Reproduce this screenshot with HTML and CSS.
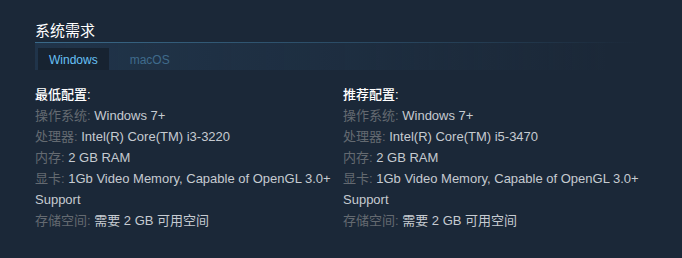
FILE: index.html
```html
<!DOCTYPE html>
<html lang="zh-CN">
<head>
  <meta charset="UTF-8"/>
  <title>系统需求</title>
  <link rel="stylesheet" href="styles.css">
</head>
<body>

<section class="sysreq">
  <h2>系统需求</h2>

  <div class="sysreq-tabs">
    <span class="tab active">Windows</span>
    <span class="tab">macOS</span>
  </div>

  <div class="sysreq-cols">
    <div class="col">
      <strong class="col-title">最低配置:</strong>
      <ul>
        <li><span class="label">操作系统:</span> Windows 7+</li>
        <li><span class="label">处理器:</span> Intel(R) Core(TM) i3-3220</li>
        <li><span class="label">内存:</span> 2 GB RAM</li>
        <li><span class="label">显卡:</span> 1Gb Video Memory, Capable of OpenGL 3.0+ Support</li>
        <li><span class="label">存储空间:</span> 需要 2 GB 可用空间</li>
      </ul>
    </div>
    <div class="col">
      <strong class="col-title">推荐配置:</strong>
      <ul>
        <li><span class="label">操作系统:</span> Windows 7+</li>
        <li><span class="label">处理器:</span> Intel(R) Core(TM) i5-3470</li>
        <li><span class="label">内存:</span> 2 GB RAM</li>
        <li><span class="label">显卡:</span> 1Gb Video Memory, Capable of OpenGL 3.0+ Support</li>
        <li><span class="label">存储空间:</span> 需要 2 GB 可用空间</li>
      </ul>
    </div>
  </div>
</section>

</body>
</html>
```

FILE: styles.css
```css
body {
  background-color: #1b2838;
  color: #c6cbd1;
  font-family: "Liberation Sans", Arial, "Noto Sans CJK SC", sans-serif;
  margin: 0;
  padding: 0;
}

.sysreq {
  padding: 21px 35px 0 35px;
}

.sysreq h2 {
  margin: 0 0 1px 0;
  font-size: 15px;
  line-height: 20px;
  font-weight: normal;
  color: #fff;
}

.sysreq-tabs {
  display: flex;
  align-items: flex-end;
  gap: 10px;
  height: 22px;
  padding: 5px 0 0 3px;
  border-top: 1px solid;
  border-image: linear-gradient(to right, #3a6a8a 0%, #2b4c66 50%, rgba(27,40,56,0) 100%) 1;
  background: linear-gradient(to right, rgba(40,70,100,0.4) 0%, rgba(35,60,85,0.25) 55%, rgba(27,40,56,0) 95%);
  width: 600px;
}

.tab {
  font-size: 12px;
  line-height: 20px;
  padding: 2px 11px 0;
  color: #3f6b8c;
}

.tab.active {
  background: #172331;
  color: #67c1f5;
}

.sysreq-cols {
  display: grid;
  grid-template-columns: 300px 300px;
  gap: 8px;
  margin-top: 14px;
}

.col-title {
  display: block;
  font-size: 13px;
  line-height: 21px;
  color: #fff;
  font-weight: 500;
}

.col ul {
  list-style: none;
  margin: 0;
  padding: 0;
}

.col li {
  font-size: 13px;
  line-height: 21px;
}

.label {
  color: #646a71;
}
```
